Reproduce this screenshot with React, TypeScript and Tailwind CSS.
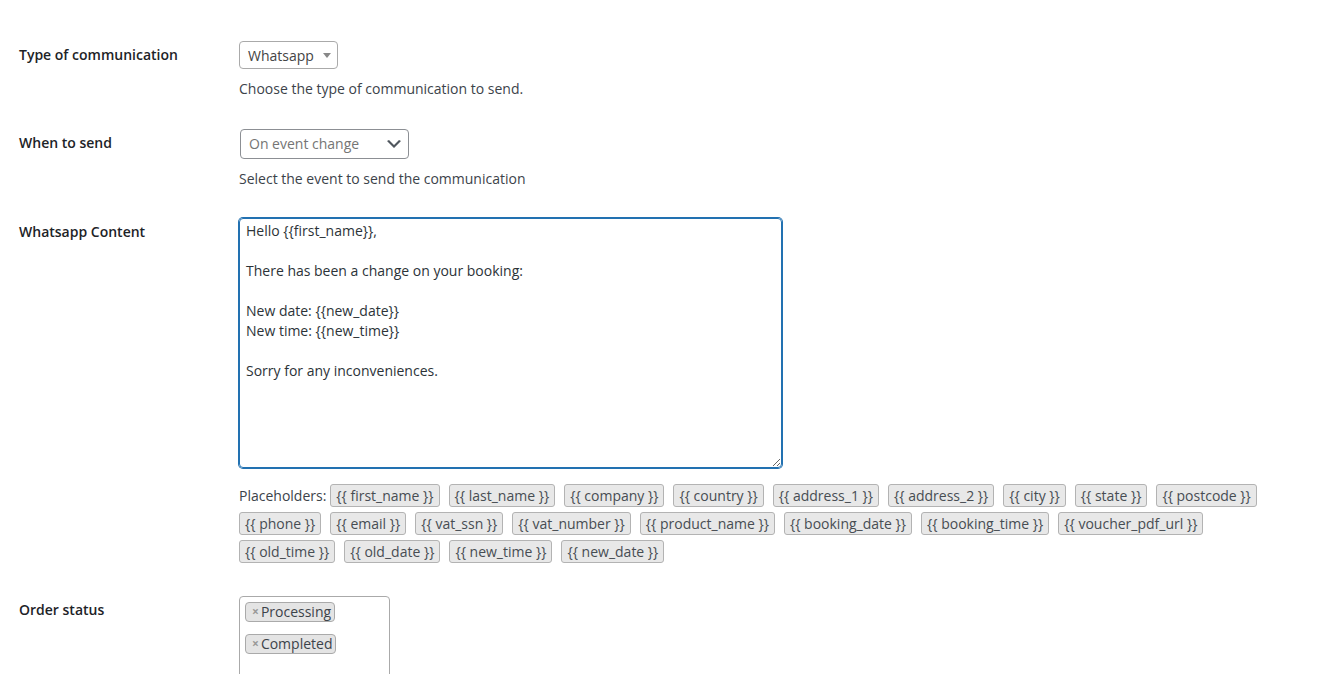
import React from 'react';

const rowOne = ['first_name', 'last_name', 'company', 'country', 'address_1', 'address_2', 'city', 'state', 'postcode'];
const rowTwo = ['phone', 'email', 'vat_ssn', 'vat_number', 'product_name', 'booking_date', 'booking_time', 'voucher_pdf_url'];
const rowThree = ['old_time', 'old_date', 'new_time', 'new_date'];

const message = `Hello {{first_name}},

There has been a change on your booking:

New date: {{new_date}}
New time: {{new_time}}

Sorry for any inconveniences.`;

function Tag({ name }: { name: string }) {
  return (
    <span className="h-[23px] px-[5px] flex items-center rounded-[3px] border border-[#b3b3b3] bg-[#e8e8e8] text-[#474d53] leading-[21px] whitespace-nowrap">
      {'{{ ' + name + ' }}'}
    </span>
  );
}

function Label({ text }: { text: string }) {
  return (
    <div className="w-[220px] shrink-0 pt-[20px] font-semibold text-[#1d2327] leading-[18px]">
      {text}
    </div>
  );
}

function StatusTag({ text }: { text: string }) {
  return (
    <span className="self-start h-[20px] flex items-center rounded-[4px] border border-[#aaaaaa] bg-[#e4e4e4] pl-[6px] pr-[3px] leading-[18px] text-[#3c434a]">
      <span className="text-[12px] font-bold text-[#999] mr-[2px]">×</span>
      {text}
    </span>
  );
}

export default function App() {
  return (
    <div
      className="min-h-screen bg-white pl-[19px] pt-[26px] text-[14px] text-[#3c434a]"
      style={{ fontFamily: '"Open Sans", "Noto Sans", sans-serif' }}>
      <div className="flex">
        <Label text="Type of communication" />
        <div className="pt-[15px] pb-[15px]">
          <div className="w-[99px] h-[28px] flex items-center justify-between rounded-[4px] border border-[#aaaaaa] pl-[8px] pr-[6px] text-[#444]">
            <span>Whatsapp</span>
            <span className="w-0 h-0 border-x-[4px] border-x-transparent border-t-[5px] border-t-[#888]" />
          </div>
          <p className="mt-[10px] leading-[20px]">Choose the type of communication to send.</p>
        </div>
      </div>

      <div className="flex">
        <Label text="When to send" />
        <div className="pt-[15px] pb-[14px]">
          <div className="ml-[1px] w-[169px] h-[30px] flex items-center justify-between rounded-[4px] border border-[#8c8f94] pl-[8px] pr-[4px] text-[#757575]">
            <span className="-mt-[1px]">On event change</span>
            <svg width="20" height="20" viewBox="0 0 20 20">
              <path d="M5 6l5 5 5-5 2 1-7 7-7-7 2-1z" fill="#50575e" />
            </svg>
          </div>
          <p className="mt-[10px] leading-[20px]">Select the event to send the communication</p>
        </div>
      </div>

      <div className="flex">
        <Label text="Whatsapp Content" />
        <div className="pt-[15px] pb-[18px]">
          <textarea
            defaultValue={message}
            className="block w-[543px] h-[250px] rounded-[4px] border border-[#2271b1] shadow-[0_0_0_1px_#2271b1] px-[6px] py-[2px] leading-[20px] text-[#2c3338] outline-none"
          />
          <div className="mt-[16px] flex flex-col gap-[5px]">
            <div className="flex items-center gap-x-[9px]">
              <span className="-mr-[5px] leading-[23px]">Placeholders:</span>
              {rowOne.map((name) => (
                <Tag key={name} name={name} />
              ))}
            </div>
            <div className="flex items-center gap-x-[9px]">
              {rowTwo.map((name) => (
                <Tag key={name} name={name} />
              ))}
            </div>
            <div className="flex items-center gap-x-[9px]">
              {rowThree.map((name) => (
                <Tag key={name} name={name} />
              ))}
            </div>
          </div>
        </div>
      </div>

      <div className="flex">
        <Label text="Order status" />
        <div className="pt-[15px]">
          <div className="w-[151px] h-[96px] rounded-[4px] border border-[#aaaaaa] pt-[5px] pl-[5px] flex flex-col gap-[12px]">
            <StatusTag text="Processing" />
            <StatusTag text="Completed" />
          </div>
        </div>
      </div>
    </div>
  );
}
